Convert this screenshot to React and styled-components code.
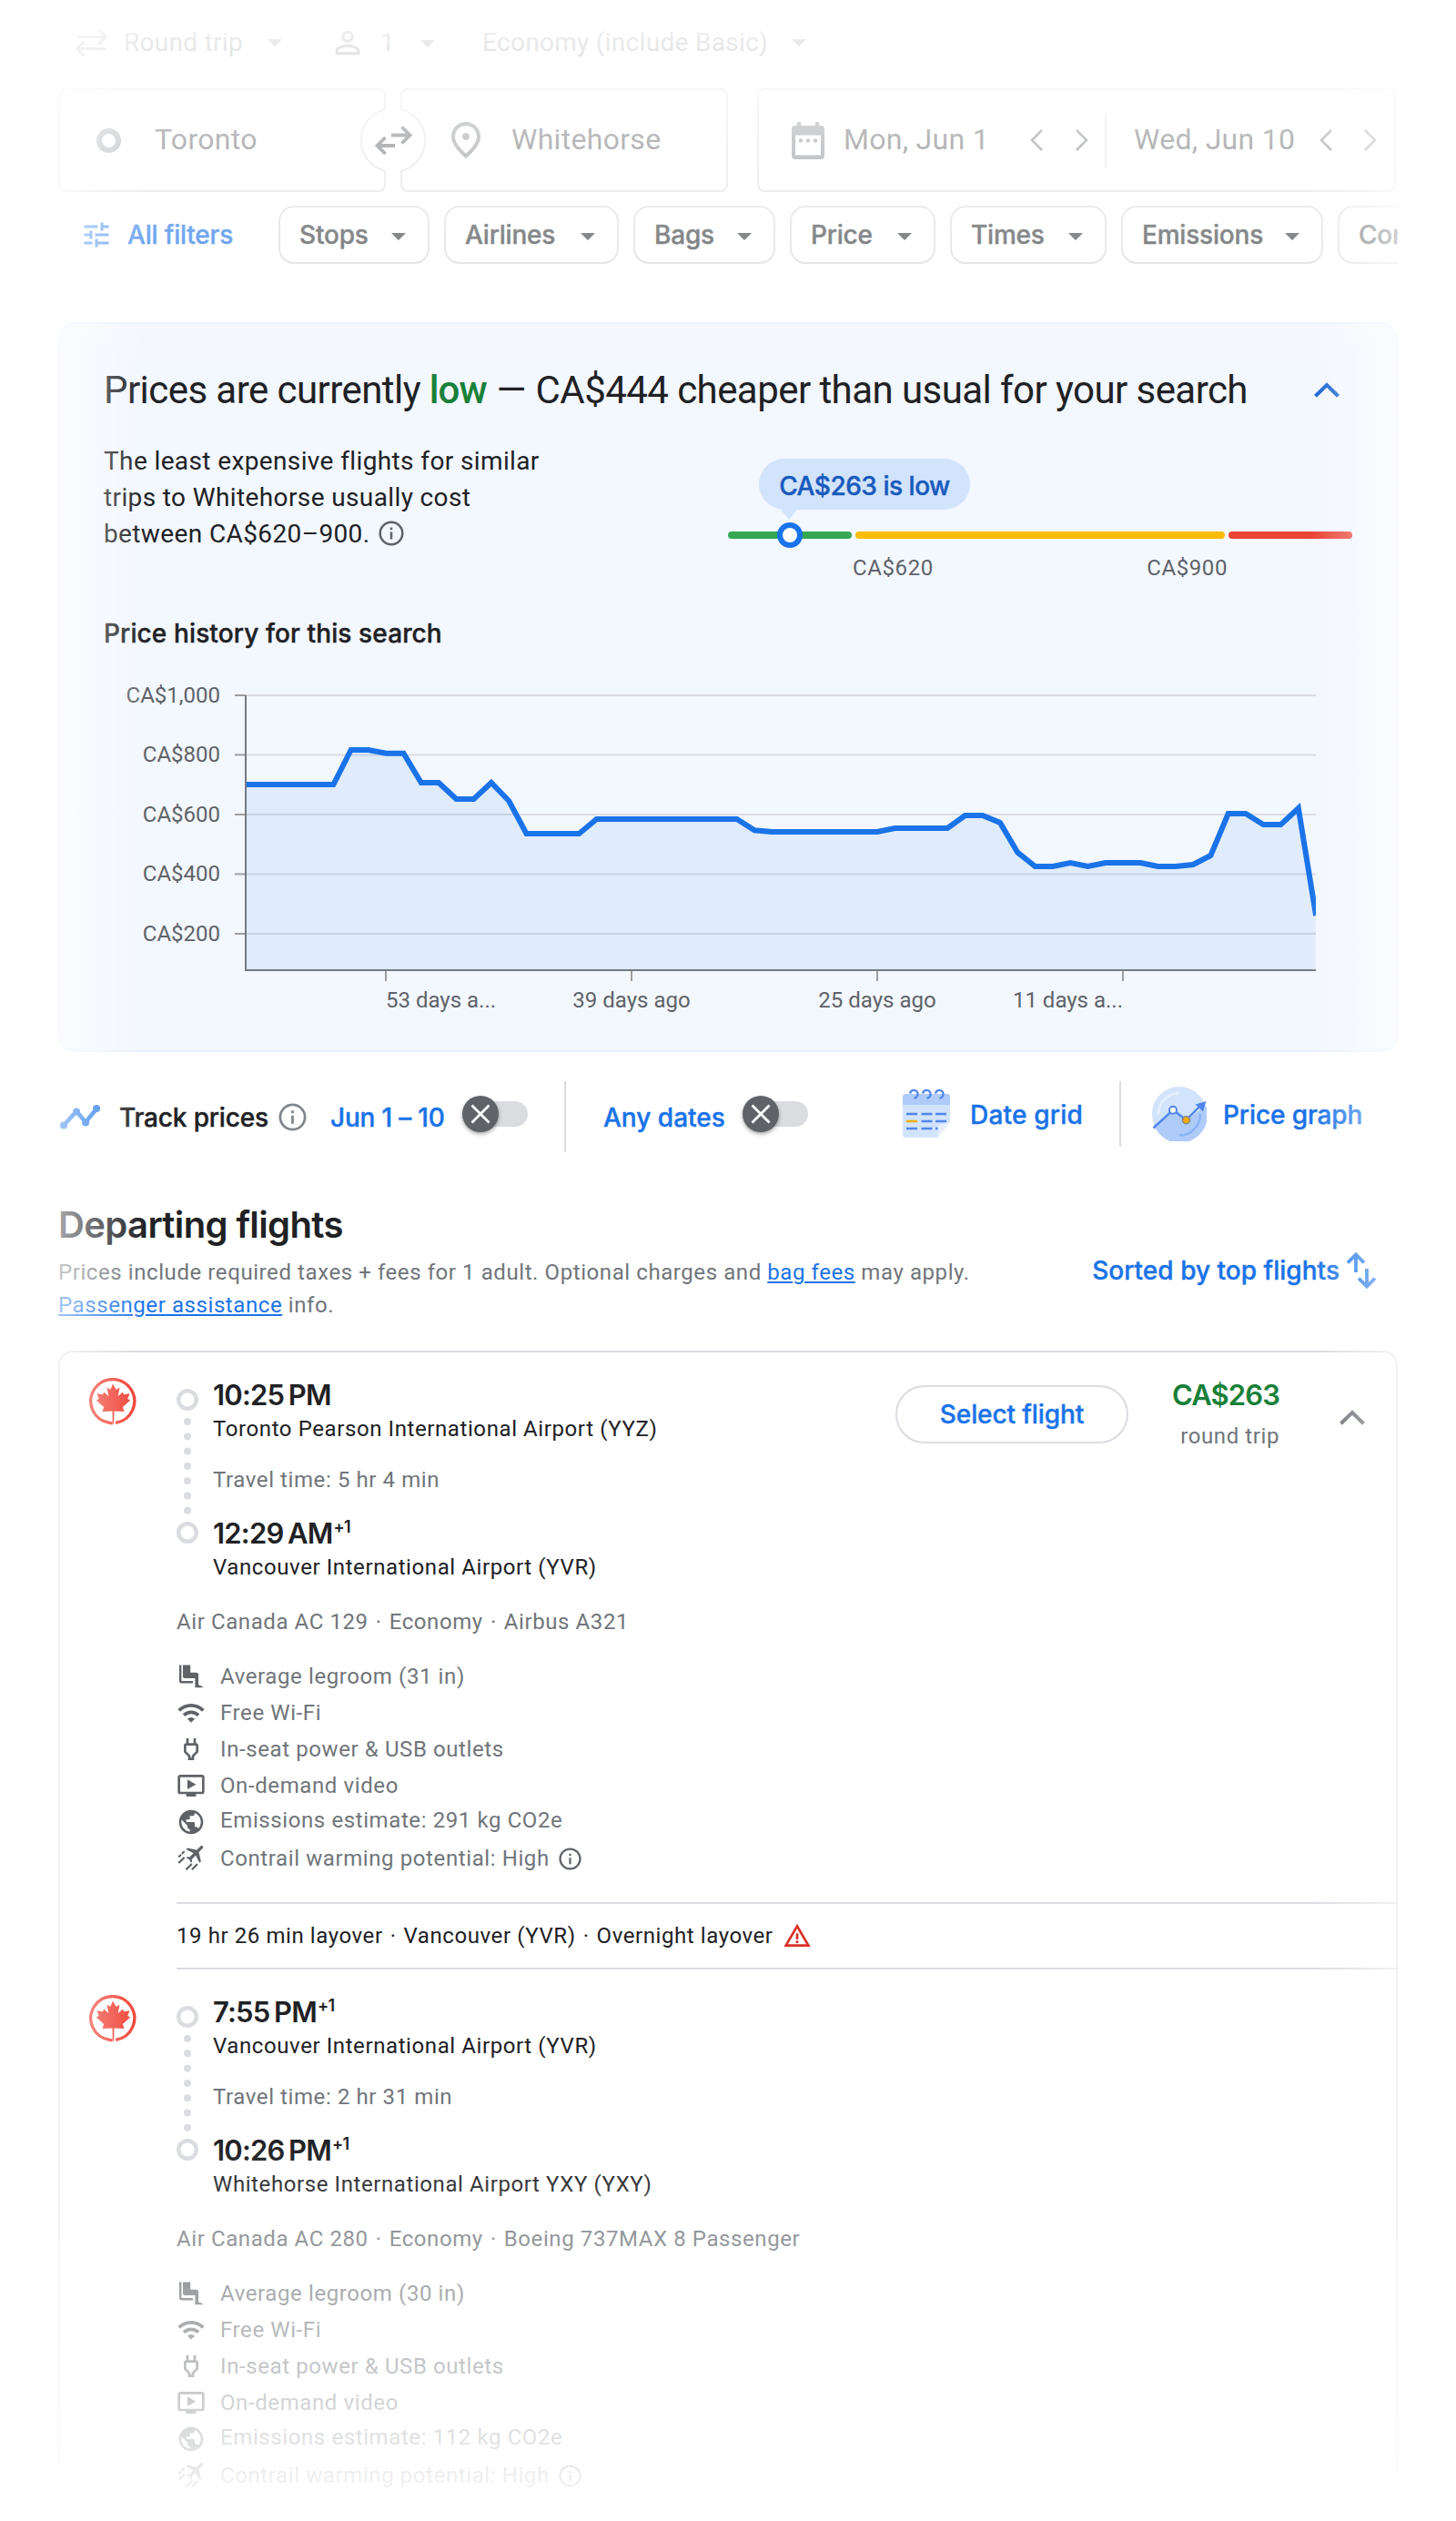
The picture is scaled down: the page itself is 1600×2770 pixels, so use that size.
import React from "react";
import styled, { createGlobalStyle } from "styled-components";
import {
  MdTune,
  MdPersonOutline,
  MdOutlinePlace,
  MdWifi,
  MdOutlinePower,
  MdOndemandVideo,
  MdPublic,
  MdWarningAmber,
} from "react-icons/md";

const GlobalStyle = createGlobalStyle`
  * {
    box-sizing: border-box;
  }

  body {
    margin: 0;
    background: #fff;
    color: #202124;
    font-family: Roboto, "Liberation Sans", sans-serif;
  }

  svg {
    display: block;
    flex: none;
  }
`;

const display = `
  font-family: Inter, "Liberation Sans", sans-serif;
  font-weight: 500;
  -webkit-text-stroke: 0.4px currentColor;
`;

const Page = styled.div`
  position: relative;
  width: 1600px;
  height: 2770px;
  padding: 0 64px;
  overflow: hidden;
  background: #fff;
`;

// white fade on all four sides, drawn over the page
const EdgeFade = styled.div`
  position: absolute;
  inset: 0;
  pointer-events: none;
  background:
    linear-gradient(to bottom, #fff, rgba(255, 255, 255, 0) 15%, rgba(255, 255, 255, 0) 85%, #fff),
    linear-gradient(to right, #fff, rgba(255, 255, 255, 0) 10%, rgba(255, 255, 255, 0) 90%, #fff);
`;

/* ---------- trip bar ---------- */

const TripBar = styled.div`
  display: grid;
  grid-template-columns: 54px 158px 68px 56px 44px 68px 340px 20px;
  align-items: center;
  height: 97px;
  padding: 0 0 4px 18px;
  color: #3c4043;
  font-size: 28px;
  letter-spacing: 0.3px;
  white-space: nowrap;
`;

const Caret = styled.span`
  width: 0;
  height: 0;
  margin-top: ${(p) => p.$drop || 0}px;
  border: 8px solid transparent;
  border-top-color: currentColor;
  border-bottom: 0;
`;

/* ---------- search boxes ---------- */

const SearchRow = styled.div`
  position: relative;
  display: flex;
  height: 114px;
`;

const Field = styled.div`
  display: flex;
  align-items: center;
  width: ${(p) => p.$width}px;
  margin-right: ${(p) => p.$after || 0}px;
  padding-left: ${(p) => p.$pad || 0}px;
  border: 2px solid #dadce0;
  border-radius: 8px;
  color: #3c4043;
`;

const FieldText = styled.span`
  padding-bottom: 2px;
  margin-left: ${(p) => p.$left || 0}px;
  font-size: 32px;
  letter-spacing: 0.3px;
  white-space: nowrap;
`;

const OriginRing = styled.span`
  width: 27px;
  height: 27px;
  border: 6px solid #80868b;
  border-radius: 50%;
`;

const SwapBadge = styled.span`
  position: absolute;
  left: 332px;
  top: 21px;
`;

const DateHalf = styled.div`
  display: grid;
  grid-template-columns: ${(p) => p.$columns};
  align-items: center;
  height: 60px;
  padding-left: ${(p) => p.$pad}px;
  border-left: ${(p) => (p.$divided ? "2px solid #dadce0" : "0")};
`;

/* ---------- filter chips ---------- */

const FilterRow = styled.div`
  display: flex;
  gap: 16px;
  margin-top: 15px;
  height: 64px;
  overflow: hidden;
`;

const AllFilters = styled.div`
  ${display}
  display: flex;
  flex: none;
  align-items: center;
  gap: 16px;
  width: 226px;
  padding-left: 24px;
  color: #1a73e8;
  font-size: 28px;
  letter-spacing: -0.2px;
  white-space: nowrap;
`;

const Chip = styled.div`
  ${display}
  display: flex;
  flex: none;
  align-items: center;
  justify-content: space-between;
  width: ${(p) => p.$width}px;
  padding: 0 24px 0 21px;
  border: 2px solid #dadce0;
  border-radius: 17px;
  color: #3c4043;
  font-size: 28px;
  letter-spacing: -0.2px;
  white-space: nowrap;
`;

/* ---------- price insights ---------- */

const Panel = styled.section`
  height: 802px;
  margin-top: 64px;
  padding: 40px 0 0 48px;
  border: 2px solid #e8f0fe;
  border-radius: 18px;
  background: #f3f7fe;
`;

const PanelHead = styled.div`
  display: flex;
  align-items: center;
  justify-content: space-between;
  height: 64px;
  padding-right: 62px;
`;

const PanelTitle = styled.h2`
  margin: 0;
  font-size: 42px;
  font-weight: 400;
  letter-spacing: -0.56px;
  white-space: nowrap;
`;

const Low = styled.span`
  color: #188038;
  font-weight: 500;
  letter-spacing: -1px;
`;

const Dash = styled.span`
  margin: 0 1px;
`;

const PanelBody = styled.div`
  display: flex;
  height: 190px;
  margin-top: 26px;
`;

const PanelText = styled.p`
  width: 500px;
  margin: 1px 186px 0 0;
  font-size: 28px;
  line-height: 40px;
  letter-spacing: 0.38px;

  svg {
    display: inline-block;
    margin-left: 9px;
    vertical-align: -4px;
  }
`;

const Gauge = styled.div`
  width: 686px;
  margin-top: 18px;
`;

const Bubble = styled.div`
  ${display}
  position: relative;
  width: 232px;
  height: 56px;
  margin-left: 34px;
  border-radius: 28px;
  background: #d2e3fc;
  color: #185abc;
  font-size: 28px;
  line-height: 60px;
  letter-spacing: -0.48px;
  text-align: center;

  &::after {
    content: "";
    position: absolute;
    left: 24px;
    top: 56px;
    border: 9px solid transparent;
    border-top: 11px solid #d2e3fc;
    border-bottom: 0;
  }
`;

const Scale = styled.div`
  position: relative;
  display: flex;
  gap: 4px;
  height: 8px;
  margin-top: 24px;
`;

const Segment = styled.div`
  width: ${(p) => p.$width}px;
  border-radius: 4px;
  background: ${(p) => p.$color};
`;

const Marker = styled.div`
  position: absolute;
  left: 54px;
  top: -10px;
  width: 28px;
  height: 28px;
  border: 6px solid #1a73e8;
  border-radius: 50%;
  background: #fff;
`;

const ScaleLabels = styled.div`
  display: flex;
  justify-content: space-between;
  width: 412px;
  margin: 16px 0 0 137px;
  color: #5f6368;
  font-size: 24px;
  line-height: 32px;
  letter-spacing: 0.6px;
`;

const HistoryTitle = styled.h3`
  ${display}
  margin: 0;
  height: 40px;
  font-size: 28px;
  line-height: 40px;
  letter-spacing: 0.12px;
`;

const AxisText = styled.text`
  fill: #5f6368;
  font-size: 24px;
`;

/* ---------- track prices ---------- */

const TrackRow = styled.div`
  display: flex;
  align-items: flex-start;
  gap: 104px;
  margin-top: 32px;
`;

const TrackGroup = styled.div`
  ${display}
  display: grid;
  grid-template-columns: ${(p) => p.$columns};
  align-items: center;
  height: ${(p) => p.$height}px;
  color: #1a73e8;
  font-size: 28px;
  white-space: nowrap;
`;

const TrackLabel = styled.span`
  padding-top: 1px;
  color: ${(p) => (p.$dark ? "#202124" : "inherit")};
  letter-spacing: ${(p) => p.$spacing || 0}px;
`;

const VerticalRule = styled.span`
  width: 2px;
  height: 100%;
  background: #dadce0;
`;

const Switch = styled.span`
  display: flex;
  align-items: center;
  width: 72px;
  height: 28px;
  margin-bottom: 6px;
  border-radius: 14px;
  background: linear-gradient(to right, transparent 12px, #dadce0 12px);
`;

const Knob = styled.span`
  display: flex;
  align-items: center;
  justify-content: center;
  width: 40px;
  height: 40px;
  flex: none;
  border-radius: 50%;
  background: #5f6368;
  box-shadow: 0 2px 4px rgba(0, 0, 0, 0.35);
`;

/* ---------- results heading ---------- */

const ResultsTitle = styled.h2`
  ${display}
  margin: 55px 0 9px 0;
  font-size: 40px;
  font-weight: 600;
  line-height: 50px;
  letter-spacing: -0.62px;
  -webkit-text-stroke: 0;
`;

const ResultsInfo = styled.div`
  display: flex;
  align-items: flex-start;
  justify-content: space-between;
  height: 72px;
`;

const Notice = styled.p`
  width: 1040px;
  margin: 0;
  color: #70757a;
  font-size: 24px;
  line-height: 36px;
  letter-spacing: 0.58px;
`;

const Link = styled.a`
  color: #1a73e8;
  text-decoration: underline;
  text-decoration-thickness: 2px;
  text-underline-offset: 2px;
`;

const SortButton = styled.div`
  ${display}
  display: flex;
  align-items: center;
  gap: 6px;
  height: 32px;
  margin-right: 22px;
  color: #1a73e8;
  font-size: 28px;
  letter-spacing: 0.02px;
  white-space: nowrap;
`;

/* ---------- flight card ---------- */

const Card = styled.section`
  height: 1310px;
  margin-top: 32px;
  border: 2px solid #dadce0;
  border-radius: 16px;
`;

const LegBox = styled.div`
  display: flex;
  align-items: flex-start;
  height: 604px;
  padding: 26px 34px 0 32px;

  > svg {
    margin-top: 2px;
  }
`;

const LegMain = styled.div`
  margin-left: 44px;
`;

const Route = styled.div`
  display: flex;
  gap: 16px;

  > svg {
    margin-top: 14px;
  }
`;

const Time = styled.div`
  ${display}
  height: 40px;
  font-size: 31px;
  font-weight: 600;
  line-height: 41px;
  letter-spacing: -0.8px;
  word-spacing: -2.5px;
  white-space: nowrap;
  -webkit-text-stroke: 0;
`;

const DayShift = styled.span`
  margin-left: 1px;
  font-size: 18px;
  line-height: 0;
  letter-spacing: -0.6px;
  vertical-align: 12px;
`;

const Line = styled.div`
  height: 34px;
  margin-top: ${(p) => p.$top || 0}px;
  margin-bottom: ${(p) => p.$bottom || 0}px;
  color: ${(p) => (p.$muted ? "#70757a" : "#202124")};
  font-size: 24px;
  line-height: 36px;
  letter-spacing: 0.59px;
  white-space: nowrap;
`;

const Dot = styled.span`
  margin: 0 1.5px;
`;

const Amenity = styled.div`
  display: flex;
  align-items: center;
  height: 40px;
  color: #5f6368;
`;

const AmenityText = styled.span`
  margin: 0 10px 0 16px;
  padding-bottom: ${(p) => p.$lift || 0}px;
  color: #70757a;
  font-size: 24px;
  letter-spacing: 0.6px;
  white-space: nowrap;
`;

const SelectButton = styled.div`
  ${display}
  width: 256px;
  height: 64px;
  margin: 10px 0 0 auto;
  border: 2px solid #dadce0;
  border-radius: 32px;
  color: #1a73e8;
  font-size: 28px;
  line-height: 61px;
  letter-spacing: -0.1px;
  text-align: center;
`;

const PriceColumn = styled.div`
  width: 166px;
  margin-right: 66px;
  text-align: right;
`;

const Price = styled.div`
  ${display}
  height: 40px;
  color: #188038;
  font-size: 31px;
  font-weight: 600;
  line-height: 41px;
  letter-spacing: -0.9px;
  -webkit-text-stroke: 0;
`;

const ChevronSlot = styled.div`
  margin-top: 37px;
`;

const Layover = styled.div`
  display: flex;
  align-items: center;
  gap: 10px;
  height: 74px;
  padding-bottom: 1px;
  margin-left: 128px;
  border-top: 2px solid #dadce0;
  border-bottom: 2px solid #dadce0;
  font-size: 24px;
  letter-spacing: 0.58px;
  white-space: nowrap;
`;

/* ---------- icons ---------- */

const RoundTripIcon = () => (
  <svg width="36" height="32" viewBox="0 0 36 32" fill="none" stroke="currentColor" strokeWidth="2.6">
    <path d="M3 9.5h31M26.5 1.5l8 8-8 8M34 22.5H3M10.5 14.5l-8 8 8 8" />
  </svg>
);

const SwapIcon = () => (
  <svg width="72" height="72" viewBox="0 0 72 72" fill="none">
    <circle cx="36" cy="36" r="35.5" fill="#fff" />
    <path d="M27.5 2A35 35 0 0 0 27.5 70M44.5 2A35 35 0 0 1 44.5 70" stroke="#dadce0" strokeWidth="2" />
    <path
      d="M34 30.5h19M45.5 21.5l9 9-9 9M38 42H19M27.5 33l-9 9 9 9"
      stroke="#3c4043"
      strokeWidth="3.8"
    />
  </svg>
);

const CalendarIcon = () => (
  <svg width="36" height="41" viewBox="0 0 36 41" fill="#70757a">
    <path
      fillRule="evenodd"
      d="M6 0h4v4h16V0h4v4h2a4 4 0 0 1 4 4v29a4 4 0 0 1-4 4H4a4 4 0 0 1-4-4V8a4 4 0 0 1 4-4h2zM4 14.5v22h28v-22z"
    />
    <circle cx="10" cy="20.5" r="2.2" />
    <circle cx="18" cy="20.5" r="2.2" />
    <circle cx="26" cy="20.5" r="2.2" />
  </svg>
);

const SideChevron = ({ right }) => (
  <svg width="16" height="24" viewBox="0 0 16 24" fill="none" stroke="#5f6368" strokeWidth="2.6">
    <path d={right ? "M2 1l11 11L2 23" : "M13 1L2 12l11 11"} />
  </svg>
);

const UpChevron = ({ color }) => (
  <svg width="28" height="17" viewBox="0 0 28 17" fill="none" stroke={color} strokeWidth="4">
    <path d="M1.5 15.3L14 3l12.5 12.3" />
  </svg>
);

const InfoIcon = ({ size = 28, color = "#5f6368" }) => (
  <svg width={size} height={size} viewBox="0 0 28 28" fill="none" stroke={color} strokeWidth="2.5">
    <circle cx="14" cy="14" r="12.3" />
    <path d="M14 12.5v8M14 7.5v2.7" />
  </svg>
);

const TrendIcon = () => (
  <svg width="48" height="30" viewBox="0 0 48 30" fill="#1a73e8">
    <path d="M6 24.5L20 9l10 12L42 6.5" fill="none" stroke="#1a73e8" strokeWidth="4.5" />
    <circle cx="6" cy="24.5" r="4" />
    <circle cx="20" cy="9.5" r="4" />
    <circle cx="30" cy="21.5" r="4" />
    <circle cx="42" cy="6" r="4" />
  </svg>
);

const CrossIcon = () => (
  <svg width="22" height="22" viewBox="0 0 22 22" stroke="#fff" strokeWidth="2.8">
    <path d="M1.5 1.5l19 19M20.5 1.5l-19 19" />
  </svg>
);

const DateGridIcon = () => (
  <svg width="52" height="56" viewBox="0 0 52 56" fill="none">
    <path d="M0 17h52v20L38 54H3a3 3 0 0 1-3-3z" fill="#d2e3fc" />
    <path d="M3 6h46a3 3 0 0 1 3 3v9H0V9a3 3 0 0 1 3-3z" fill="#aecbfa" />
    <path
      d="M8 5.5a4.3 4.3 0 1 1 4.5 5M22 5.5a4.3 4.3 0 1 1 4.5 5M36 5.5a4.3 4.3 0 1 1 4.5 5"
      stroke="#5086ec"
      strokeWidth="2.4"
    />
    <path
      d="M4 28h12M20.5 28h12M36 28h12M20.5 36h12M36 36h12M4 44h12M20.5 44h12M36 44h2.5"
      stroke="#5086ec"
      strokeWidth="2.4"
    />
    <path d="M4 36h12" stroke="#f9ab00" strokeWidth="2.4" />
    <path d="M38 54l2-13.5L52 37z" fill="#e8f0fe" />
  </svg>
);

const PriceGraphIcon = () => (
  <svg width="60" height="60" viewBox="0 0 60 60" fill="none">
    <circle cx="30" cy="30" r="30" fill="#d2e3fc" />
    <path d="M2 42L23.5 26l14 11L59 21a30 30 0 0 1-57 21z" fill="#aecbfa" />
    <path d="M7 30A23 23 0 0 1 30 7" stroke="#e8f0fe" strokeWidth="2.5" />
    <path d="M53 30A23 23 0 0 1 30 53.5" stroke="#8ab4f8" strokeWidth="2.5" />
    <path d="M1.5 45.5L23 25.5l14.5 11L55 19" stroke="#5086ec" strokeWidth="2.4" />
    <path d="M47.5 19.5l12-3.5L56 27.5z" fill="#5086ec" />
    <circle cx="23" cy="25.7" r="4" fill="#fff" stroke="#5086ec" strokeWidth="2" />
    <circle cx="37.5" cy="36.7" r="4" fill="#f9ab00" stroke="#80868b" strokeWidth="1.5" />
  </svg>
);

const SortIcon = () => (
  <svg width="36" height="42" viewBox="0 0 36 42" fill="none" stroke="currentColor" strokeWidth="3.8">
    <path d="M12 23V4.5M3 12.5l9-9 9 9M24 19v18.5M15 29.5l9 9 9-9" />
  </svg>
);

const MapleLogo = () => (
  <svg width="52" height="54" viewBox="0 0 52 54">
    <path d="M29 49.3A24 24 0 1 0 22.5 49.3L25.5 50" fill="none" stroke="#f0392c" strokeWidth="3.3" />
    <path
      d="M26 6.5l3.6 6.3 3.9-2-1.9 9.4 5.2-4.8 1.2 2.9 6.5-1-2.3 5.6 3 1.7-8.3 7.3 1.600 5.100-11-.5-.3 13-1.500 2.500-.2-15.500-11 .5 1.600-5.100-8.300-7.300 3-1.700-2.300-5.600 6.500 1 1.200-2.900 5.200 4.800-1.900-9.400 3.900 2z"
      fill="#f0392c"
    />
  </svg>
);

const LegroomIcon = () => (
  <svg width="32" height="32" viewBox="0 0 32 32" fill="currentColor">
    <path d="M3 3.6h2.4v17.3H18v2.6H5.5A2.5 2.5 0 0 1 3 21z" />
    <path d="M7 3.6h8.2v8.2h6.3a2.6 2.6 0 0 1 2.6 2.6v10.8l4.700 2v1h-8.400V18H9a2 2 0 0 1-2-2z" />
  </svg>
);

const ContrailIcon = () => (
  <svg width="32" height="32" viewBox="0 0 32 32" fill="currentColor">
    <path
      transform="translate(21 10.3) rotate(45) scale(1.1) translate(-11.5 -12)"
      d="M21 16v-2l-8-5V3.5c0-.83-.67-1.5-1.5-1.5S10 2.67 10 3.5V9l-8 5v2l8-2.5V19l-2 1.5V22l3.5-1 3.5 1v-1.5L13 19v-5.5l8 2.5z"
    />
    <path
      d="M2.3 14.5l2.7-2.7M5.9 10.9l2.7-2.7M2.3 21l6.4-6.1M10.5 28.2l6.3-6.2M16.9 28.2l6.1-6"
      stroke="currentColor"
      strokeWidth="2.2"
    />
  </svg>
);

const RouteDots = () => (
  <svg width="24" height="172" viewBox="0 0 24 172" fill="#dadce0">
    <circle cx="12" cy="12" r="9.8" fill="none" stroke="#dadce0" strokeWidth="4.4" />
    <circle cx="12" cy="158" r="9.8" fill="none" stroke="#dadce0" strokeWidth="4.4" />
    {[0, 1, 2, 3, 4, 5, 6].map((i) => (
      <circle key={i} cx="12" cy={36 + i * 16.3} r="4" />
    ))}
  </svg>
);

/* ---------- price history chart ---------- */

// one y value per day, oldest first
const history = [
  862, 862, 862, 862, 862, 862, 824, 824, 827.8, 827.8, 860, 860, 878, 878, 860, 880, 916, 916, 916, 916, 900,
  900, 900, 900, 900, 900, 900, 900, 900, 912.3, 914, 914, 914, 914, 914, 914, 914, 910, 910, 910, 910, 896, 896,
  904, 936.7, 952, 952, 948, 952, 948, 948, 948, 952, 952, 950, 940, 894, 894, 906, 906, 888, 1006,
];

const yTicks = [
  ["CA$1,000", 764],
  ["CA$800", 829.4],
  ["CA$600", 895],
  ["CA$400", 960.4],
  ["CA$200", 1026],
];

const xTicks = [
  [424, "53 days a...", "start"],
  [694, "39 days ago", "middle"],
  [964, "25 days ago", "middle"],
  [1234, "11 days a...", "end"],
];

const HistoryChart = () => {
  const points = history.map((y, i) => `${(270 + i * 19.28).toFixed(1)},${y}`).join(" ");
  return (
    <svg width="1420" height="420" viewBox="114 716 1420 420">
      <clipPath id="plot">
        <rect x="270" y="740" width="1176" height="326" />
      </clipPath>
      {yTicks.map(([label, y]) => (
        <g key={label}>
          <path d={`M270 ${y}H1446`} stroke="#dadce0" strokeWidth="2" />
          <path d={`M258 ${y}H270`} stroke="#9e9e9e" strokeWidth="2" />
          <AxisText x="242" y={y + 7.8} textAnchor="end">
            {label}
          </AxisText>
        </g>
      ))}
      <g clipPath="url(#plot)">
        <polygon points={`270,1066 ${points} 1446,1066`} fill="#1a73e8" fillOpacity="0.085" />
        <polyline points={points} fill="none" stroke="#1a73e8" strokeWidth="6" />
      </g>
      <path d="M270 764V1066H1446" fill="none" stroke="#757982" strokeWidth="2" />
      {xTicks.map(([x, label, anchor]) => (
        <g key={x}>
          <path d={`M${x} 1067V1078`} stroke="#9e9e9e" strokeWidth="2" />
          <AxisText x={x} y="1107" textAnchor={anchor}>
            {label}
          </AxisText>
        </g>
      ))}
    </svg>
  );
};

/* ---------- content ---------- */

const chips = [
  ["Stops", 166],
  ["Airlines", 192],
  ["Bags", 156],
  ["Price", 160],
  ["Times", 172],
  ["Emissions", 222],
  ["Connecting airports", 340],
];

const legs = [
  {
    from: ["10:25 PM", "", "Toronto Pearson International Airport (YYZ)"],
    travel: "5 hr 4 min",
    to: ["12:29 AM", "+1", "Vancouver International Airport (YVR)"],
    flight: ["Air Canada AC 129", "Economy", "Airbus A321"],
    legroom: 31,
    co2: 291,
  },
  {
    from: ["7:55 PM", "+1", "Vancouver International Airport (YVR)"],
    travel: "2 hr 31 min",
    to: ["10:26 PM", "+1", "Whitehorse International Airport YXY (YXY)"],
    flight: ["Air Canada AC 280", "Economy", "Boeing 737MAX 8 Passenger"],
    legroom: 30,
    co2: 112,
  },
];

const Dotted = ({ parts }) => (
  <span>
    {parts.map((part, i) => (
      <React.Fragment key={part}>
        {i > 0 && (
          <>
            {" "}
            <Dot>·</Dot>{" "}
          </>
        )}
        {part}
      </React.Fragment>
    ))}
  </span>
);

const Stop = ({ stop }) => (
  <>
    <Time>
      {stop[0]}
      {stop[1] && <DayShift>{stop[1]}</DayShift>}
    </Time>
    <Line>{stop[2]}</Line>
  </>
);

const Leg = ({ leg, children }) => (
  <LegBox>
    <MapleLogo />
    <LegMain>
      <Route>
        <RouteDots />
        <div>
          <Stop stop={leg.from} />
          <Line $muted $top={22} $bottom={22}>
            Travel time: {leg.travel}
          </Line>
          <Stop stop={leg.to} />
        </div>
      </Route>
      <Line $muted $top={26} $bottom={24}>
        <Dotted parts={leg.flight} />
      </Line>
      <Amenity>
        <LegroomIcon />
        <AmenityText>Average legroom ({leg.legroom} in)</AmenityText>
      </Amenity>
      <Amenity>
        <MdWifi size={32} />
        <AmenityText>Free Wi-Fi</AmenityText>
      </Amenity>
      <Amenity>
        <MdOutlinePower size={32} />
        <AmenityText>In-seat power &amp; USB outlets</AmenityText>
      </Amenity>
      <Amenity>
        <MdOndemandVideo size={32} />
        <AmenityText>On-demand video</AmenityText>
      </Amenity>
      <Amenity>
        <MdPublic size={32} />
        <AmenityText $lift={4}>Emissions estimate: {leg.co2} kg CO2e</AmenityText>
      </Amenity>
      <Amenity>
        <ContrailIcon />
        <AmenityText>Contrail warming potential: High</AmenityText>
        <InfoIcon size={25} />
      </Amenity>
    </LegMain>
    {children}
  </LegBox>
);

const App = () => {
  return (
    <Page>
      <GlobalStyle />

      <TripBar>
        <RoundTripIcon />
        <span>Round trip</span>
        <Caret />
        <MdPersonOutline size={40} />
        <span>1</span>
        <Caret $drop={2} />
        <span>Economy (include Basic)</span>
        <Caret />
      </TripBar>

      <SearchRow>
        <Field $width={360} $after={16} $pad={40}>
          <OriginRing />
          <FieldText $left={37}>Toronto</FieldText>
        </Field>
        <Field $width={360} $after={32} $pad={46}>
          <MdOutlinePlace size={48} color="#70757a" />
          <FieldText $left={26}>Whitehorse</FieldText>
        </Field>
        <Field $width={702}>
          <DateHalf $columns="57px 205px 49px 33px" $pad={36}>
            <CalendarIcon />
            <FieldText>Mon, Jun 1</FieldText>
            <SideChevron />
            <SideChevron right />
          </DateHalf>
          <DateHalf $columns="204px 48px 20px" $pad={30} $divided>
            <FieldText>Wed, Jun 10</FieldText>
            <SideChevron />
            <SideChevron right />
          </DateHalf>
        </Field>
        <SwapBadge>
          <SwapIcon />
        </SwapBadge>
      </SearchRow>

      <FilterRow>
        <AllFilters>
          <MdTune size={36} />
          All filters
        </AllFilters>
        {chips.map(([label, width]) => (
          <Chip key={label} $width={width}>
            {label}
            <Caret $drop={3} />
          </Chip>
        ))}
      </FilterRow>

      <Panel>
        <PanelHead>
          <PanelTitle>
            Prices are currently <Low>low</Low> <Dash>—</Dash> CA$444 cheaper than usual for your search
          </PanelTitle>
          <UpChevron color="#1967d2" />
        </PanelHead>
        <PanelBody>
          <PanelText>
            The least expensive flights for similar trips to Whitehorse usually cost between CA$620–900.
            <InfoIcon />
          </PanelText>
          <Gauge>
            <Bubble>CA$263 is low</Bubble>
            <Scale>
              <Segment $width={136} $color="#34a853" />
              <Segment $width={406} $color="#fbbc04" />
              <Segment $width={136} $color="#ea4335" />
              <Marker />
            </Scale>
            <ScaleLabels>
              <span>CA$620</span>
              <span>CA$900</span>
            </ScaleLabels>
          </Gauge>
        </PanelBody>
        <HistoryTitle>Price history for this search</HistoryTitle>
        <HistoryChart />
      </Panel>

      <TrackRow>
        <TrackGroup $columns="67px 175px 57px 145px 112px 43px 153px 72px" $height={78}>
          <TrendIcon />
          <TrackLabel $dark $spacing={-0.15}>
            Track prices
          </TrackLabel>
          <InfoIcon size={31} color="#80868b" />
          <TrackLabel $spacing={-0.2}>Jun 1 – 10</TrackLabel>
          <Switch>
            <Knob>
              <CrossIcon />
            </Knob>
          </Switch>
          <VerticalRule />
          <TrackLabel>Any dates</TrackLabel>
          <Switch>
            <Knob>
              <CrossIcon />
            </Knob>
          </Switch>
        </TrackGroup>
        <TrackGroup $columns="74px 164px 36px 78px auto" $height={72}>
          <DateGridIcon />
          <TrackLabel $spacing={0.2}>Date grid</TrackLabel>
          <VerticalRule />
          <PriceGraphIcon />
          <TrackLabel $spacing={-0.1}>Price graph</TrackLabel>
        </TrackGroup>
      </TrackRow>

      <ResultsTitle>Departing flights</ResultsTitle>
      <ResultsInfo>
        <Notice>
          Prices include required taxes + fees for 1 adult. Optional charges and <Link>bag fees</Link> may apply.{" "}
          <Link>Passenger assistance</Link> info.
        </Notice>
        <SortButton>
          Sorted by top flights
          <SortIcon />
        </SortButton>
      </ResultsInfo>

      <Card>
        <Leg leg={legs[0]}>
          <SelectButton>Select flight</SelectButton>
          <PriceColumn>
            <Price>CA$263</Price>
            <Line $muted $top={8}>
              round trip
            </Line>
          </PriceColumn>
          <ChevronSlot>
            <UpChevron color="#5f6368" />
          </ChevronSlot>
        </Leg>
        <Layover>
          <Dotted parts={["19 hr 26 min layover", "Vancouver (YVR)", "Overnight layover"]} />
          <MdWarningAmber size={32} color="#d93025" />
        </Layover>
        <Leg leg={legs[1]} />
      </Card>

      <EdgeFade />
    </Page>
  );
};

export default App;
